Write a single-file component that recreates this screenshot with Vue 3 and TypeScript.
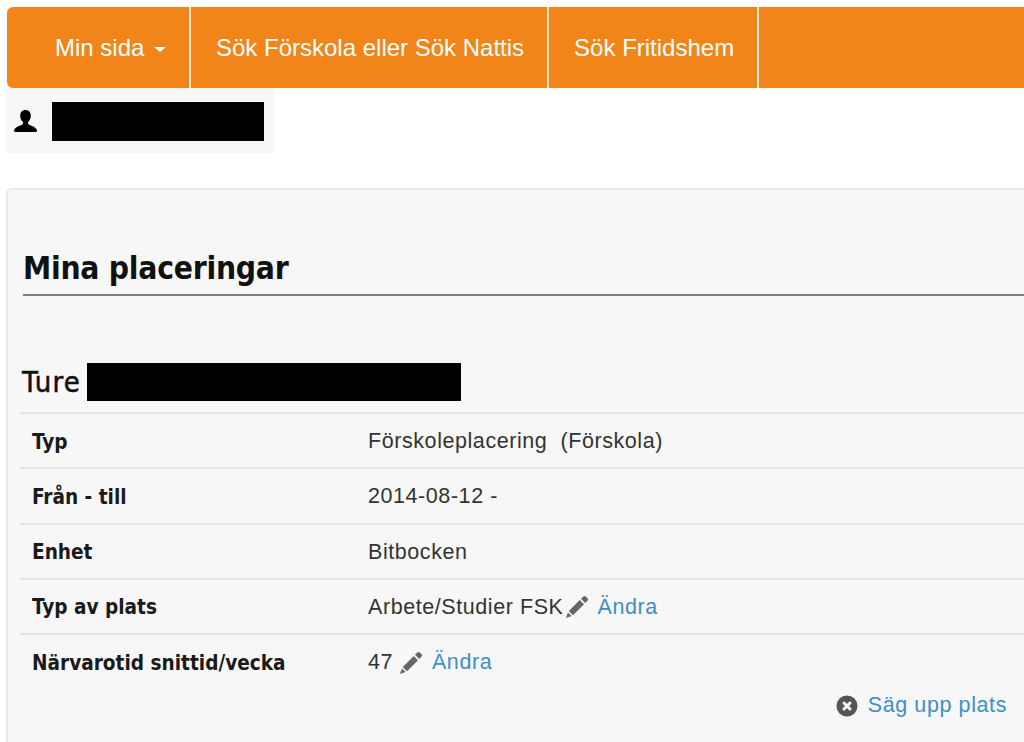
<script setup lang="ts">
interface Row { label: string; value: string; edit?: boolean }
const navItems: string[] = ['Sök Förskola eller Sök Nattis', 'Sök Fritidshem']
const rows: Row[] = [
  { label: 'Typ', value: 'Förskoleplacering\u00a0 (Förskola)' },
  { label: 'Från - till', value: '2014-08-12 -' },
  { label: 'Enhet', value: 'Bitbocken' },
  { label: 'Typ av plats', value: 'Arbete/Studier FSK', edit: true },
  { label: 'Närvarotid snittid/vecka', value: '47\u2009', edit: true },
]
</script>

<template>
  <div class="page">
    <nav class="nav">
      <a class="nav-item first">Min sida <span class="caret"></span></a>
      <a v-for="item in navItems" :key="item" class="nav-item">{{ item }}</a>
    </nav>
    <div class="user">
      <svg class="user-icon" viewBox="2 1 20 21" width="23" height="23" preserveAspectRatio="none">
        <path fill="#000" d="M12 1c-3 0-4.600 2.200-4.600 5.200 0 2.300.9 4.300 2.200 5.500.4.4.4 1.800-.2 2.400-1 1-6.400 2.100-7.400 5.600-.2.800.2 1.300 1 1.300h18c.8 0 1.200-.5 1-1.300-1-3.500-6.400-4.600-7.400-5.600-.6-.6-.6-2-.2-2.400 1.300-1.200 2.200-3.200 2.200-5.500 0-3-1.600-5.200-4.600-5.200z"/>
      </svg>
      <span class="redact user-redact"></span>
    </div>
    <section class="panel">
      <h1 class="title">Mina placeringar</h1>
      <div class="child">
        <span>Ture</span>
        <span class="redact child-redact"></span>
      </div>
      <div class="rows">
        <div v-for="row in rows" :key="row.label" class="row">
          <div class="label">{{ row.label }}</div>
          <div class="value">
            <span>{{ row.value }}</span>
            <template v-if="row.edit">
              <svg class="pencil" viewBox="0 0 24 24" width="24" height="24">
                <path fill="#666" d="M18.300 1.500c.7-.7 1.700-.7 2.400 0l1.800 1.800c.7.7.7 1.700 0 2.400l-2.300 2.300-4.200-4.200zM14.800 5l4.200 4.200L8 20.200 3.800 16zM2.900 17.400l3.700 3.700L1 23z"/>
              </svg>
              <a class="link">Ändra</a>
            </template>
          </div>
        </div>
      </div>
      <div class="actions">
        <svg class="cancel" viewBox="0 0 22 22" width="22" height="22">
          <circle cx="11" cy="11" r="10.500" fill="#555"/>
          <path d="M8 8l6 6M14 8l-6 6" stroke="#f5f5f5" stroke-width="3" stroke-linecap="round"/>
        </svg>
        <a class="link">Säg upp plats</a>
      </div>
    </section>
  </div>
</template>

<style>
html, body { margin: 0; overflow: hidden; background: #fff; }
</style>

<style scoped>
.page {
  width: 1024px;
  height: 742px;
  overflow: hidden;
  box-sizing: border-box;
  padding: 7px 0 0 7px;
  font-family: "Liberation Sans", Arial, sans-serif;
  color: #222;
}
.nav {
  display: flex;
  width: 1040px;
  height: 81px;
  background: #f2851a;
  border-radius: 6px;
}
.nav-item {
  display: flex;
  align-items: center;
  gap: 9px;
  box-sizing: border-box;
  height: 81px;
  padding: 0 23px 0 25px;
  border-right: 2px solid #fbe3cb;
  color: #fff;
  font-size: 24px;
  letter-spacing: 0;
  white-space: nowrap;
}
.first { padding-left: 48px; width: 184px; gap: 10px; }
.caret {
  width: 0;
  height: 0;
  margin-top: 4px;
  border-left: 6px solid transparent;
  border-right: 6px solid transparent;
  border-top: 5px solid #fff;
}
.user {
  display: flex;
  align-items: center;
  width: 268px;
  height: 65px;
  box-sizing: border-box;
  padding: 0 10px 0 8px;
  gap: 15px;
  margin-left: -1px;
  background: #f7f7f8;
}
.user-icon { width: 23px; height: 23px; flex: none; margin-top: 2px; }
.redact { display: block; background: #000; }
.user-redact { width: 212px; height: 39px; margin-top: 1px; }
.panel {
  box-sizing: border-box;
  width: 1040px;
  height: 560px;
  margin-top: 35px;
  margin-left: -1px;
  padding: 0 0 0 15px;
  background: #f7f7f7;
  border: 2px solid #e8e8e8;
  border-radius: 6px;
}
.title {
  margin: 0;
  padding: 42px 0 8px 0;
  height: 106px;
  box-sizing: border-box;
  display: flex;
  align-items: flex-end;
  border-bottom: 2px solid #808080;
  font-family: "DejaVu Sans", sans-serif;
  font-stretch: condensed;
  font-weight: 700;
  font-size: 31.500px;
  letter-spacing: -0.250px;
  color: #111;
}
.child {
  display: flex;
  align-items: center;
  gap: 6px;
  height: 38px;
  margin-top: 67px;
  margin-left: -1px;
  font-family: "DejaVu Sans", sans-serif;
  font-stretch: condensed;
  font-weight: 400;
  font-size: 29px;
  letter-spacing: 1.200px;
  color: #111;
  -webkit-text-stroke: 0.500px #111;
}
.child-redact { width: 374px; height: 38px; }
.rows { margin-top: 11px; margin-left: -3px; }
.row {
  display: flex;
  align-items: center;
  box-sizing: border-box;
  height: 55.250px;
  padding-top: 2px;
  border-top: 2px solid #e3e3e3;
  padding-left: 12px;
}
.label {
  width: 336px;
  flex: none;
  font-family: "DejaVu Sans", sans-serif;
  font-stretch: condensed;
  font-weight: 700;
  font-size: 20.600px;
  color: #1a1a1a;
}
.value {
  display: flex;
  align-items: center;
  font-size: 21.500px;
  letter-spacing: 0.570px;
  color: #333;
  white-space: pre;
}
.pencil { width: 24px; height: 24px; margin: 0 9px 0 1px; }
.link { color: #3f8fc4; }
.actions {
  display: flex;
  justify-content: flex-end;
  align-items: center;
  gap: 10px;
  width: 984px;
  margin-top: 5px;
  font-size: 21.500px;
  letter-spacing: 0.600px;
}
.cancel { width: 22px; height: 22px; }
</style>
